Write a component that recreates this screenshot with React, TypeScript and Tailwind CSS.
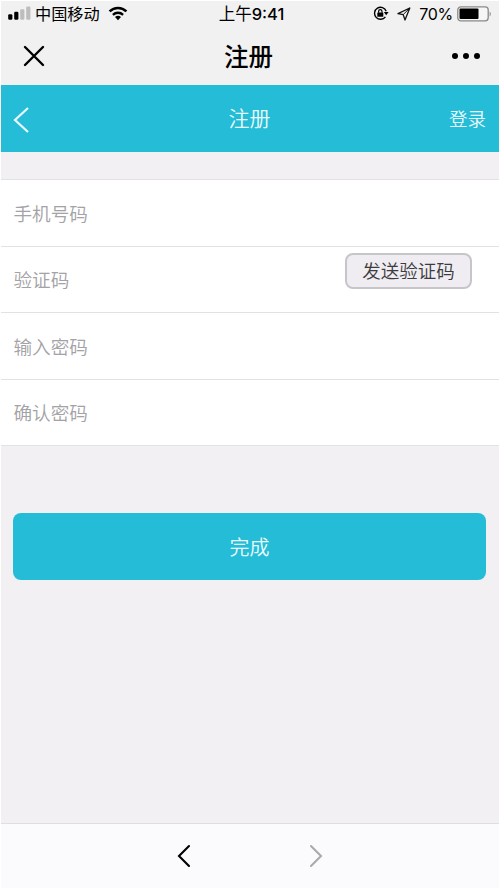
import React from 'react';

const fields = [
  { id: 'phone', label: '手机号码' },
  { id: 'code', label: '验证码', action: '发送验证码' },
  { id: 'password', label: '输入密码' },
  { id: 'confirm', label: '确认密码' },
];

function StatusBar() {
  return (
    <div className="h-[27px] flex items-center justify-between px-[7px] pb-[2px] text-black">
      <div className="flex-1 flex items-center">
        <svg width="23" height="14" viewBox="0 0 23 14">
          <rect x="0.2" y="8.2" width="4.2" height="5.6" rx="1.2" fill="#000" />
          <rect x="6.2" y="5.8" width="4.2" height="8" rx="1.2" fill="#000" />
          <rect x="12.2" y="3.3" width="4.2" height="10.5" rx="1.2" fill="#bdbdbd" />
          <rect x="18.2" y="0.6" width="4.2" height="13.2" rx="1.2" fill="#bdbdbd" />
        </svg>
        <span className="ml-[4px] pb-px text-[16.2px] leading-none">中国移动</span>
        <svg className="ml-[8px]" width="20" height="15" viewBox="0 0 20 15">
          <path d="M1.6 5.4 A12 12 0 0 1 18.4 5.4" fill="none" stroke="#000" strokeWidth="2.6" />
          <path d="M4.9 8.8 A7.4 7.4 0 0 1 15.1 8.8" fill="none" stroke="#000" strokeWidth="2.3" />
          <path d="M7 11.1 A4.3 4.3 0 0 1 13 11.1 L10 14.2 Z" fill="#000" />
        </svg>
      </div>
      <div className="flex items-center text-[16.5px] leading-none whitespace-nowrap pl-[3px]">
        <span>上午</span>
        <span className="pt-px font-['Inter',sans-serif] font-medium">9:41</span>
      </div>
      <div className="flex-1 flex items-center justify-end">
        {/* Rotation lock */}
        <svg width="17" height="15" viewBox="0 0 17 15">
          <path d="M13.2 5.2 A6 6 0 1 0 12.4 10.9" fill="none" stroke="#000" strokeWidth="1.4" />
          <path d="M10.8 6 L15.6 6 L13.2 9.2 Z" fill="#000" />
          <rect x="4.3" y="6.4" width="6" height="4.4" rx="0.6" fill="#000" />
          <path d="M5.6 6.8 V5.4 a1.7 1.7 0 0 1 3.4 0 V6.8" fill="none" stroke="#000" strokeWidth="1.2" />
        </svg>
        {/* Location arrow */}
        <svg className="ml-[7px]" width="14" height="14" viewBox="0 0 14 14">
          <path d="M12.8 1 L1 6.6 L6.2 7.6 L8 13 Z" fill="none" stroke="#111" strokeWidth="1.3" strokeLinejoin="round" />
          <path d="M12.8 1 L6.2 7.6" stroke="#111" strokeWidth="1" />
        </svg>
        <span className="ml-[8px] text-[16px] leading-none tracking-[-0.3px] font-['Inter',sans-serif]">70%</span>
        <svg className="ml-[4px]" width="35" height="16" viewBox="0 0 35 16">
          <rect x="0.8" y="0.8" width="30.4" height="14" rx="3" fill="#f6f6f6" stroke="#8a8a8a" strokeWidth="1.3" />
          <rect x="2.5" y="2.6" width="19" height="10.4" rx="1" fill="#000" />
          <path d="M32.6 5.4 a3.2 3.2 0 0 1 0 5 Z" fill="#8a8a8a" />
        </svg>
      </div>
    </div>
  );
}

function TitleBar() {
  return (
    <div className="h-[57px] flex items-center pb-[2px] text-black">
      <div className="flex-1 pl-[22px]">
        <svg width="22" height="22" viewBox="0 0 22 22">
          <path d="M2 2 L20 20 M20 2 L2 20" stroke="#000" strokeWidth="2.4" strokeLinecap="round" />
        </svg>
      </div>
      <h1 className="text-[24.5px] leading-none font-medium pt-[2px] -ml-[6px]">注册</h1>
      <div className="flex-1 flex justify-end gap-[5px] pr-[19px]">
        <span className="w-[6px] h-[6px] rounded-full bg-black" />
        <span className="w-[6px] h-[6px] rounded-full bg-black" />
        <span className="w-[6px] h-[6px] rounded-full bg-black" />
      </div>
    </div>
  );
}

export default function Register() {
  return (
    <div className="w-[500px] h-[889px] bg-white p-px overflow-hidden font-['Noto_Sans_CJK_SC',sans-serif]">
      <div className="h-full flex flex-col bg-[#f2f0f3]">
        <div className="bg-[#f1f1f1]">
          <StatusBar />
          <TitleBar />
        </div>

        {/* Page header */}
        <header className="h-[67px] shrink-0 flex items-center bg-[#24bcd7] text-[#e9fbfc]">
          <div className="flex-1 pl-[12px] pt-[3px]">
            <svg width="17" height="28" viewBox="0 0 17 28">
              <path d="M15 2 L2 14 L15 26" fill="none" stroke="#e9fbfc" strokeWidth="2.2" />
            </svg>
          </div>
          <h2 className="text-[21px] leading-none font-[350] pb-[2px]">注册</h2>
          <div className="flex-1 text-right pr-[13px] text-[18.5px] leading-none font-[350]">登录</div>
        </header>

        {/* Form */}
        <div className="mt-[27px] bg-white border-t border-[#e2e1e5]">
          {fields.map((field) => (
            <div key={field.id} className="h-[66.6px] flex items-center justify-between pl-[12.5px] pr-[27px] border-b border-[#e2e1e5]">
              <label className="text-[18.6px] leading-none font-[350] text-[#a3a2a6]">{field.label}</label>
              {field.action && (
                <button className="w-[127px] h-[36px] mb-[16px] pb-[2px] rounded-lg border-2 border-[#c6c5c9] bg-[#efedf1] text-[18.5px] leading-none font-[350] text-[#3c3c3f]">
                  {field.action}
                </button>
              )}
            </div>
          ))}
        </div>

        <button className="mt-[67px] ml-[12px] mr-[13px] h-[67px] shrink-0 rounded-lg bg-[#24bcd7] text-[#e9fbfc] text-[20px] leading-none font-[350]">
          完成
        </button>

        {/* Browser navigation */}
        <div className="mt-auto h-[65px] shrink-0 flex items-center justify-center gap-[118px] bg-[#fbfafd] border-t border-[#dfdee2]">
          <svg width="14" height="24" viewBox="0 0 14 24">
            <path d="M12 2 L2 12 L12 22" fill="none" stroke="#000" strokeWidth="2.1" strokeLinecap="round" />
          </svg>
          <svg width="14" height="24" viewBox="0 0 14 24">
            <path d="M2 2 L12 12 L2 22" fill="none" stroke="#aaa9ac" strokeWidth="2.1" strokeLinecap="round" />
          </svg>
        </div>
      </div>
    </div>
  );
}
